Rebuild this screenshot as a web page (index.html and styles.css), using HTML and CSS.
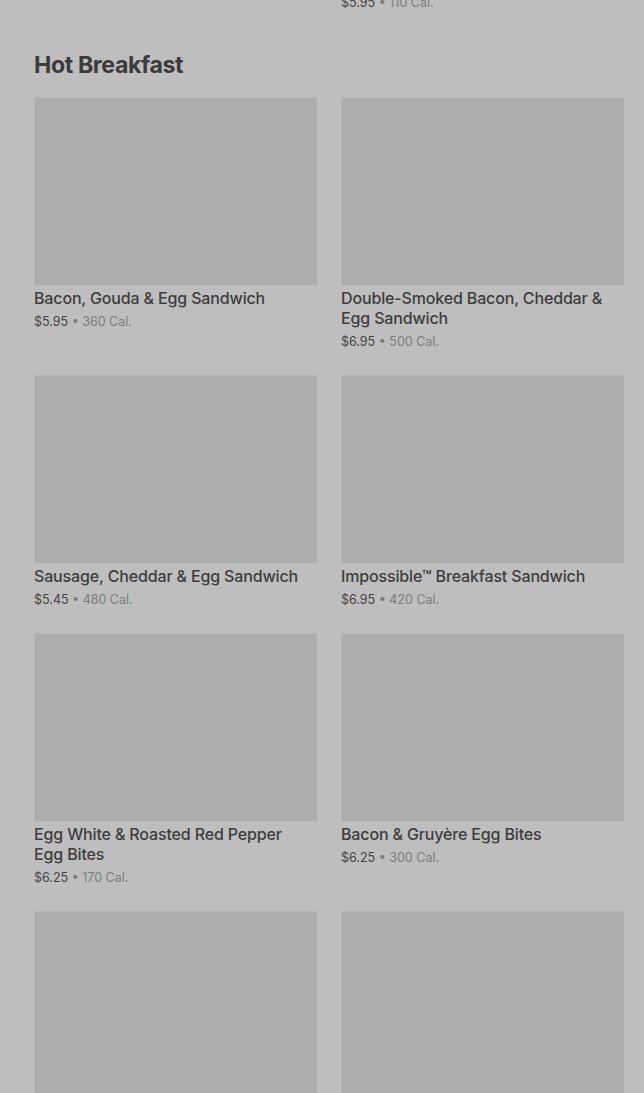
FILE: index.html
```html
<!DOCTYPE html>
<html>
<head>
<meta charset="utf-8">
<link rel="stylesheet" href="styles.css">
</head>
<body>
<div class="page">
  <div class="prev-row">
    <div class="prev-cell"></div>
    <div class="prev-cell"><p class="meta"><span class="price">$5.95</span> • <span class="cal">110 Cal.</span></p></div>
  </div>
  <h2 class="section-title">Hot Breakfast</h2>
  <div class="grid">
    <div class="card"><div class="thumb"></div><p class="name">Bacon, Gouda &amp; Egg Sandwich</p><p class="meta"><span class="price">$5.95</span> • <span class="cal">360 Cal.</span></p></div>
    <div class="card"><div class="thumb"></div><p class="name">Double-Smoked Bacon, Cheddar &amp; Egg Sandwich</p><p class="meta"><span class="price">$6.95</span> • <span class="cal">500 Cal.</span></p></div>
    <div class="card"><div class="thumb"></div><p class="name">Sausage, Cheddar &amp; Egg Sandwich</p><p class="meta"><span class="price">$5.45</span> • <span class="cal">480 Cal.</span></p></div>
    <div class="card"><div class="thumb"></div><p class="name">Impossible™ Breakfast Sandwich</p><p class="meta"><span class="price">$6.95</span> • <span class="cal">420 Cal.</span></p></div>
    <div class="card"><div class="thumb"></div><p class="name">Egg White &amp; Roasted Red Pepper Egg Bites</p><p class="meta"><span class="price">$6.25</span> • <span class="cal">170 Cal.</span></p></div>
    <div class="card"><div class="thumb"></div><p class="name">Bacon &amp; Gruyère Egg Bites</p><p class="meta"><span class="price">$6.25</span> • <span class="cal">300 Cal.</span></p></div>
    <div class="card"><div class="thumb"></div></div>
    <div class="card"><div class="thumb"></div></div>
  </div>
</div>
</body>
</html>
```
FILE: styles.css
```css
html, body {
  margin: 0;
  padding: 0;
  background: #bebebe;
  overflow: hidden;
}
body {
  font-family: Inter, "Noto Sans", sans-serif;
  color: #3a3a3a;
}
.page {
  padding: 0 20px 0 34px;
}
.prev-row {
  display: grid;
  grid-template-columns: 1fr 1fr;
  column-gap: 24px;
  margin-top: -11px;
}
.section-title {
  margin: 40px 0 18px;
  font-size: 23.2px;
  line-height: 28px;
  font-weight: 700;
  letter-spacing: -0.4px;
  color: #3b3b3b;
}
.grid {
  display: grid;
  grid-template-columns: 1fr 1fr;
  column-gap: 24px;
  row-gap: 25px;
}
.card {
  display: flex;
  flex-direction: column;
}
.thumb {
  height: 188px;
  background: #adadad;
  box-shadow: inset 1px 1px 0 #b4b4b4;
}
.name {
  margin: 3px 0 0;
  padding-right: 12px;
  font-size: 16px;
  line-height: 20px;
  font-weight: 500;
  letter-spacing: -0.15px;
  color: #3d3d3d;
}
.meta {
  margin: 5px 0 0;
  font-size: 12.5px;
  line-height: 17px;
  color: #7a7a7a;
}
.price {
  color: #444;
}
.cal {
  color: #7c7c7c;
}
```
